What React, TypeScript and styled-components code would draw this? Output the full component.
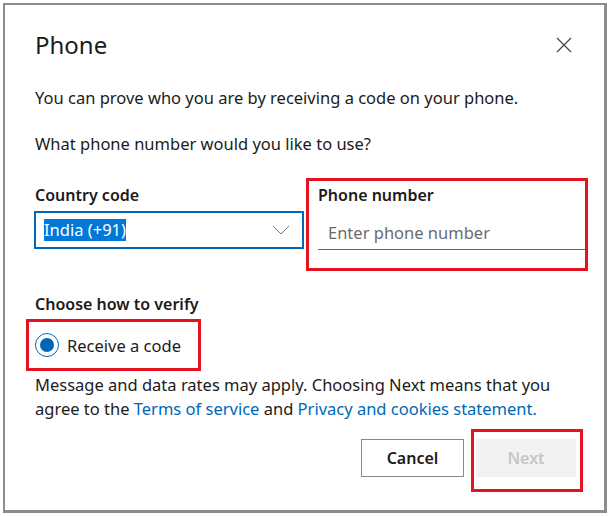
import styled, { createGlobalStyle } from 'styled-components';

const GlobalStyle = createGlobalStyle`
    html, body {
        margin: 0;
        padding: 0;
        background: #ffffff;
    }
    body {
        font-family: "Noto Sans", "Open Sans", sans-serif;
        color: #1b1b1b;
    }
`;

const Dialog = styled.div`
    box-sizing: border-box;
    margin: 3px 0 0 3px;
    width: 604px;
    height: 510px;
    border-style: solid;
    border-color: #8c8c8c;
    border-width: 2px 3px 3px 2px;
    padding: 20px 30px 0 30px;
    display: flex;
    flex-direction: column;
`;

const Header = styled.div`
    display: flex;
    align-items: center;
    justify-content: space-between;
    height: 40px;
`;

const Title = styled.h1`
    margin: 0;
    font-size: 24px;
    font-weight: 400;
    line-height: 32px;
    color: #1b1b1b;
`;

const CloseButton = styled.button`
    border: none;
    background: none;
    padding: 0;
    margin-right: 1px;
    width: 18px;
    height: 18px;
    display: flex;
    align-items: center;
    justify-content: center;
    cursor: pointer;
`;

const Text = styled.p<{ $top: number }>`
    margin: ${(p) => p.$top}px 0 0 0;
    font-size: 16.5px;
    line-height: 24px;
    color: #1b1b1b;
`;

const FieldGrid = styled.div`
    display: grid;
    grid-template-columns: 270px 282px;
    column-gap: 2px;
    margin: 22px 0 0 -1px;
    align-items: start;
`;

const Field = styled.div<{ $marked?: boolean }>`
    box-sizing: border-box;
    display: flex;
    flex-direction: column;
    padding: ${(p) => (p.$marked ? '4px 0 18px 9px' : '7px 0 0 0')};
    border: ${(p) => (p.$marked ? '3px solid #e3141f' : 'none')};
`;

const Label = styled.label<{ $indent?: number }>`
    font-size: 16px;
    font-weight: 600;
    line-height: 20px;
    margin-left: ${(p) => p.$indent ?? 0}px;
    color: #1b1b1b;
`;

const Select = styled.div`
    box-sizing: border-box;
    margin-top: 6px;
    height: 38px;
    border: 2px solid #0067b8;
    display: flex;
    align-items: center;
    justify-content: space-between;
    padding: 0 12px 0 8px;
`;

const Selected = styled.span`
    background: #0078d7;
    color: #ffffff;
    font-size: 16.5px;
    line-height: 22px;
`;

const Input = styled.input`
    box-sizing: border-box;
    margin-top: 6px;
    height: 39px;
    width: 267px;
    border: none;
    border-bottom: 1px solid #666666;
    padding: 5px 10px 0 10px;
    font-family: inherit;
    font-size: 16.5px;
    outline: none;
    background: transparent;
    &::placeholder {
        color: #6b6b6b;
    }
`;

const SectionLabel = styled.div`
    margin-top: 23px;
    font-size: 16px;
    font-weight: 600;
    line-height: 20px;
`;

const RadioBox = styled.label`
    box-sizing: border-box;
    margin: 5px 0 0 -9px;
    width: 175px;
    height: 52px;
    border: 3px solid #e3141f;
    display: flex;
    align-items: center;
    gap: 8px;
    padding-left: 6px;
    font-size: 16.5px;
`;

const RadioCircle = styled.span`
    box-sizing: border-box;
    width: 24px;
    height: 24px;
    border-radius: 50%;
    border: 1px solid #0067b8;
    display: flex;
    align-items: center;
    justify-content: center;
    &::after {
        content: '';
        width: 14px;
        height: 14px;
        border-radius: 50%;
        background: #0067b8;
    }
`;

const Link = styled.a`
    color: #0067b8;
    text-decoration: none;
`;

const Footer = styled.div`
    display: flex;
    justify-content: flex-end;
    align-items: flex-start;
    margin: 8px -9px 0 0;
`;

const Button = styled.button<{ $disabled?: boolean }>`
    box-sizing: border-box;
    height: 38px;
    font-family: inherit;
    font-size: 16px;
    font-weight: 600;
    border: ${(p) => (p.$disabled ? 'none' : '1px solid #8a8a8a')};
    background: ${(p) => (p.$disabled ? '#f2f2f2' : '#ffffff')};
    color: ${(p) => (p.$disabled ? '#c6c6c6' : '#1b1b1b')};
`;

const CancelButton = styled(Button)`
    width: 103px;
    margin-top: 10px;
`;

const NextBox = styled.div`
    box-sizing: border-box;
    margin-left: 7px;
    width: 112px;
    height: 63px;
    border: 3px solid #e3141f;
    padding: 7px 4px 0 2px;
`;

const NextButton = styled(Button)`
    width: 100px;
`;

export default function App() {
    return (
        <>
            <GlobalStyle />
            <Dialog>
                <Header>
                    <Title>Phone</Title>
                    <CloseButton aria-label="Close">
                        <svg width="16" height="16" viewBox="0 0 16 16">
                            <path d="M1 1 L15 15 M15 1 L1 15" stroke="#444" strokeWidth="1.2" fill="none" />
                        </svg>
                    </CloseButton>
                </Header>

                <Text $top={21}>You can prove who you are by receiving a code on your phone.</Text>
                <Text $top={22}>What phone number would you like to use?</Text>

                <FieldGrid>
                    <Field>
                        <Label $indent={1}>Country code</Label>
                        <Select>
                            <Selected>India (+91)</Selected>
                            <svg width="18" height="10" viewBox="0 0 18 10">
                                <path d="M1 1 L9 9 L17 1" stroke="#777" strokeWidth="1" fill="none" />
                            </svg>
                        </Select>
                    </Field>
                    <Field $marked>
                        <Label>Phone number</Label>
                        <Input placeholder="Enter phone number" />
                    </Field>
                </FieldGrid>

                <SectionLabel>Choose how to verify</SectionLabel>
                <RadioBox>
                    <RadioCircle />
                    Receive a code
                </RadioBox>

                <Text $top={2}>
                    Message and data rates may apply. Choosing Next means that you agree to the{' '}
                    <Link href="#">Terms of service</Link> and <Link href="#">Privacy and cookies statement.</Link>
                </Text>

                <Footer>
                    <CancelButton>Cancel</CancelButton>
                    <NextBox>
                        <NextButton $disabled>Next</NextButton>
                    </NextBox>
                </Footer>
            </Dialog>
        </>
    );
}
